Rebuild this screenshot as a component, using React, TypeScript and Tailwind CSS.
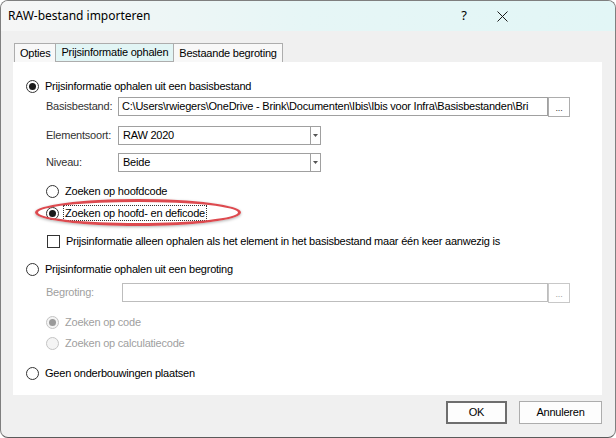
import React from "react";

const font = { fontFamily: '"Liberation Sans", Arial, sans-serif' };

const Radio = ({ checked = false, disabled = false }: { checked?: boolean; disabled?: boolean }) => (
  <span
    className={`flex h-[13px] w-[13px] shrink-0 items-center justify-center rounded-full border ${
      disabled ? "border-[#c4c4c4] bg-[#f4f4f4]" : "border-[#333333] bg-white"
    }`}
  >
    {checked && (
      <span className={`h-[7px] w-[7px] rounded-full ${disabled ? "bg-[#9a9a9a]" : "bg-[#1a1a1a]"}`} />
    )}
  </span>
);

const RadioRow = ({
  label,
  checked,
  disabled,
  indent,
  focus,
  className = "",
}: {
  label: string;
  checked?: boolean;
  disabled?: boolean;
  indent?: boolean;
  focus?: boolean;
  className?: string;
}) => (
  <div className={`flex h-[20px] items-center ${indent ? "pl-[20px]" : ""} ${className}`}>
    <Radio checked={checked} disabled={disabled} />
    {focus ? (
      <span className="ml-[4px] whitespace-nowrap border border-dotted border-[#333] px-[1px] leading-[14px] text-black">
        {label}
      </span>
    ) : (
      <span className={`ml-[6px] whitespace-nowrap ${disabled ? "text-[#a0a0a0]" : "text-black"}`}>{label}</span>
    )}
  </div>
);

const ComboArrow = () => (
  <span className="flex h-full w-[10px] items-center justify-center border-l border-[#a0a0a0]">
    <svg width="5" height="3" viewBox="0 0 5 3">
      <path d="M0 0h5L2.5 3z" fill="#555" />
    </svg>
  </span>
);

const Field = ({ label, children, disabled }: { label: string; children: React.ReactNode; disabled?: boolean }) => (
  <div className="flex h-[19px] items-center pl-[20px]">
    <span className={`w-[72px] shrink-0 ${disabled ? "text-[#a0a0a0]" : "text-[#333]"}`}>{label}</span>
    {children}
  </div>
);

const DotsButton = ({ disabled }: { disabled?: boolean }) => (
  <span
    className={`relative z-10 flex h-[20px] w-[22px] shrink-0 items-end justify-center border bg-white pb-[3px] text-[9px] leading-none ${
      disabled ? "border-[#c8c8c8] text-[#a0a0a0]" : "border-[#adadad] text-[#333]"
    }`}
  >
    ...
  </span>
);

export default function App() {
  return (
    <div className="h-[438px] w-[616px] bg-white text-[11px] tracking-[-0.22px]" style={font}>
      <div className="flex h-full w-full flex-col overflow-hidden rounded-[8px] border border-[#7f7f7f] border-b-[#5a5a5a] bg-[#f0f0f0]">
        {/* title bar */}
        <div className="flex h-[30px] shrink-0 items-center bg-gradient-to-r from-[#f6f6f6] via-[#e6f6f6] to-[#e2f6f6] pl-[7px] tracking-normal">
          <span className="text-[12px] text-black" style={{ fontFamily: '"Noto Sans", "Open Sans", sans-serif' }}>
            RAW-bestand importeren
          </span>
          <span className="ml-auto mr-[30px] text-[13px] text-black" style={{ fontFamily: '"Noto Sans", sans-serif' }}>
            ?
          </span>
          <svg width="11" height="11" viewBox="0 0 11 11" className="mr-[107px]">
            <path d="M0.5 0.5l10 10M10.5 0.5l-10 10" stroke="#1a1a1a" strokeWidth="1" />
          </svg>
        </div>

        {/* tabs */}
        <div className="mt-[12px] flex h-[19px] shrink-0 pl-[13px]">
          <div className="flex h-full items-center border border-b-0 border-[#adadad] bg-[#f8f8f8] px-[5px]">Opties</div>
          <div className="flex h-full items-center border-y border-[#adadad] bg-[#e2f5f5] px-[5px] text-black">
            Prijsinformatie ophalen
          </div>
          <div className="flex h-full items-center border border-b-0 border-[#adadad] bg-[#f8f8f8] px-[5px]">
            Bestaande begroting
          </div>
        </div>

        {/* panel */}
        <div className="relative ml-[12px] mr-[13px] flex h-[333px] shrink-0 flex-col bg-white pl-[13px] pt-[14px]">
          <RadioRow label="Prijsinformatie ophalen uit een basisbestand" checked />
          <div className="mt-[1px]">
            <Field label="Basisbestand:">
              <span className="flex h-[19px] w-[430px] items-center overflow-hidden whitespace-nowrap border border-[#a0a0a0] bg-white pl-[3px] text-black">
                C:\Users\rwiegers\OneDrive - Brink\Documenten\Ibis\Ibis voor Infra\Basisbestanden\Bri
              </span>
              <DotsButton />
            </Field>
          </div>
          <div className="mt-[10px]">
            <Field label="Elementsoort:">
              <span className="flex h-[19px] w-[203px] items-center justify-between border border-[#a0a0a0] bg-white pl-[4px] text-black">
                RAW 2020
                <ComboArrow />
              </span>
            </Field>
          </div>
          <div className="mt-[8px]">
            <Field label="Niveau:">
              <span className="flex h-[19px] w-[203px] items-center justify-between border border-[#a0a0a0] bg-white pl-[4px] text-black">
                Beide
                <ComboArrow />
              </span>
            </Field>
          </div>
          <RadioRow label="Zoeken op hoofdcode" indent className="mt-[9px]" />
          <RadioRow label="Zoeken op hoofd- en deficode" checked indent focus className="mt-[2px]" />
          <div className="mt-[8px] flex h-[20px] items-center pl-[21px]">
            <span className="h-[13px] w-[13px] border border-[#333] bg-white" />
            <span className="ml-[6px] whitespace-nowrap text-black">
              Prijsinformatie alleen ophalen als het element in het basisbestand maar één keer aanwezig is
            </span>
          </div>
          <RadioRow label="Prijsinformatie ophalen uit een begroting" className="mt-[8px]" />
          <div className="mt-[4px]">
            <Field label="Begroting:" disabled>
              <span className="ml-[4px] h-[19px] w-[426px] border border-[#bdbdbd] bg-white" />
              <DotsButton disabled />
            </Field>
          </div>
          <RadioRow label="Zoeken op code" checked disabled indent className="mt-[10px]" />
          <RadioRow label="Zoeken op calculatiecode" disabled indent className="mt-[1px]" />
          <RadioRow label="Geen onderbouwingen plaatsen" className="mt-[10px]" />

          {/* red highlight */}
          <div className="pointer-events-none absolute left-[22px] top-[137px] h-[27px] w-[206px] rounded-[50%] border-[3px] border-[#dd4a4f] shadow-[0_1px_3px_rgba(0,0,0,0.3)]" />
        </div>

        {/* buttons */}
        <div className="mt-[6px] flex justify-end gap-[12px] pr-[13px]">
          <button className="h-[23px] w-[61px] border-2 border-[#6e6e6e] bg-[#fdfdfd] text-[11px] text-black">OK</button>
          <button className="h-[23px] w-[83px] border border-[#adadad] bg-[#fdfdfd] text-[11px] text-black">Annuleren</button>
        </div>
      </div>
    </div>
  );
}
